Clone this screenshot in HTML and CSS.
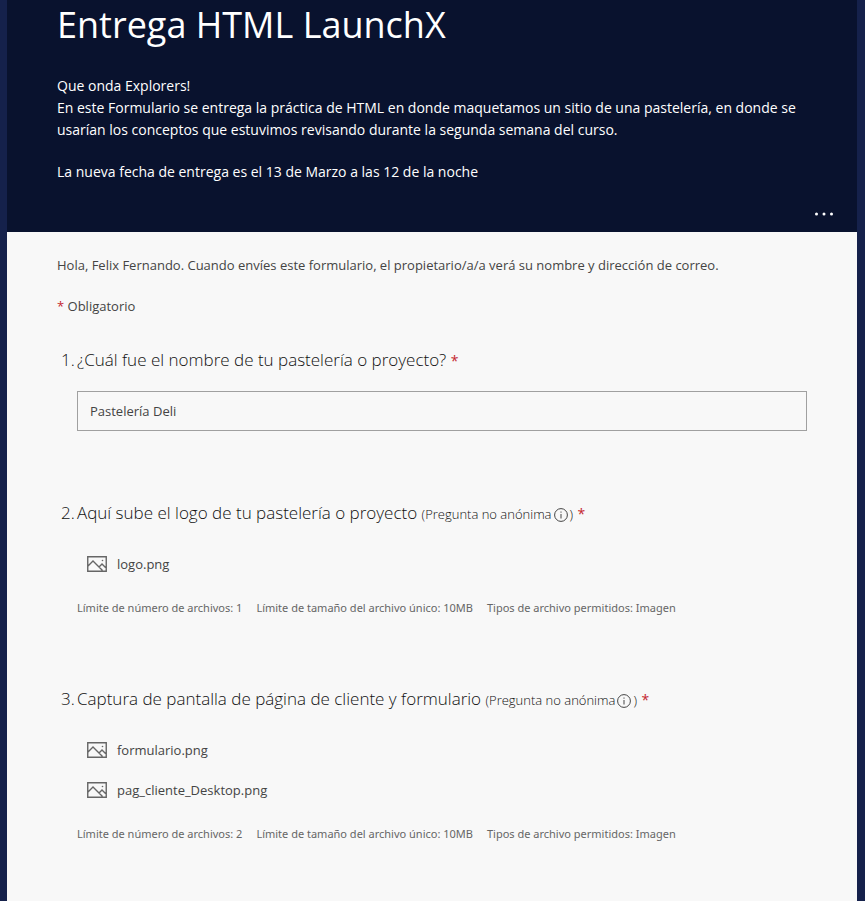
FILE: index.html
```html
<!DOCTYPE html>
<html lang="es">
<head>
<meta charset="utf-8">
<meta name="viewport" content="width=device-width, initial-scale=1">
<title>Entrega HTML LaunchX</title>
<link rel="stylesheet" href="styles.css">
</head>
<body>
<svg class="sprite" aria-hidden="true">
  <symbol id="picture" viewBox="0 0 20 16">
    <path d="M.75.75h18.5v14.5H.75zM1 10l5-5 9.500 9.500M12 11l3-3 4.500 4.500" fill="none" stroke="currentColor" stroke-width="1.400"/>
    <circle cx="15.500" cy="4.500" r=".8" fill="currentColor"/>
  </symbol>
  <symbol id="info" viewBox="0 0 14 14">
    <circle cx="7" cy="7" r="6.400" fill="none" stroke="currentColor"/>
    <path d="M7 6v4.500M7 3.500v1.200" stroke="currentColor"/>
  </symbol>
</svg>
<main class="form-page">
  <header class="banner">
    <h1 class="title">Entrega HTML LaunchX</h1>
    <div class="intro">
      <p>Que onda Explorers!</p>
      <p>En este Formulario se entrega la práctica de HTML en donde maquetamos un sitio de una pastelería, en donde se usarían los conceptos que estuvimos revisando durante la segunda semana del curso.</p>
      <p class="deadline">La nueva fecha de entrega es el 13 de Marzo a las 12 de la noche</p>
    </div>
    <button class="more" type="button" aria-label="Más opciones">
      <svg width="20" height="4" viewBox="0 0 20 4" fill="currentColor"><circle cx="2.500" cy="2" r="1.500"/><circle cx="10" cy="2" r="1.500"/><circle cx="17.500" cy="2" r="1.500"/></svg>
    </button>
  </header>
  <form class="content">
    <p class="notice">Hola, Felix Fernando. Cuando envíes este formulario, el propietario/a/a verá su nombre y dirección de correo.</p>
    <p class="required-note"><span class="star">*</span> Obligatorio</p>

    <section class="question">
      <h2 class="heading"><span class="number">1.</span><label for="project">¿Cuál fue el nombre de tu pastelería o proyecto? <span class="star">*</span></label></h2>
      <input class="answer" id="project" type="text" value="Pastelería Deli">
    </section>

    <section class="question">
      <h2 class="heading"><span class="number">2.</span><span>Aquí sube el logo de tu pastelería o proyecto <small class="hint">(Pregunta no anónima<svg class="info"><use href="#info"/></svg>)</small> <span class="star">*</span></span></h2>
      <ul class="files">
        <li class="file"><svg class="picture"><use href="#picture"/></svg>logo.png</li>
      </ul>
      <p class="limits"><span>Límite de número de archivos: 1</span><span>Límite de tamaño del archivo único: 10MB</span><span>Tipos de archivo permitidos: Imagen</span></p>
    </section>

    <section class="question">
      <h2 class="heading"><span class="number">3.</span><span>Captura de pantalla de página de cliente y formulario <small class="hint">(Pregunta no anónima<svg class="info"><use href="#info"/></svg>)</small> <span class="star">*</span></span></h2>
      <ul class="files">
        <li class="file"><svg class="picture"><use href="#picture"/></svg>formulario.png</li>
        <li class="file"><svg class="picture"><use href="#picture"/></svg>pag_cliente_Desktop.png</li>
      </ul>
      <p class="limits"><span>Límite de número de archivos: 2</span><span>Límite de tamaño del archivo único: 10MB</span><span>Tipos de archivo permitidos: Imagen</span></p>
    </section>
  </form>
</main>
</body>
</html>
```
FILE: styles.css
```css
* {
  box-sizing: border-box;
}

body,
h1,
h2,
p,
ul {
  margin: 0;
  padding: 0;
}

body {
  background: #15214b;
  color: #444;
  font-family: "Open Sans", "Noto Sans", sans-serif;
  font-size: 13px;
  line-height: 20px;
}

.sprite {
  display: none;
}

.form-page {
  display: flex;
  flex-direction: column;
  min-height: 100vh;
  margin: 0 8px 0 7px;
  background: #f8f8f8;
}

.banner {
  display: flex;
  flex-direction: column;
  padding: 0 20px 8px 50px;
  background: #09122e;
  color: #fff;
}

.title {
  font-size: 36px;
  font-weight: 400;
  line-height: 50px;
}

.intro {
  margin-top: 25px;
  padding-right: 20px;
  font-size: 14px;
  line-height: 22px;
}

.deadline {
  margin-top: 20px;
}

.more {
  display: flex;
  align-items: center;
  justify-content: center;
  align-self: flex-end;
  width: 26px;
  height: 20px;
  margin-top: 21px;
  padding: 0;
  border: 0;
  background: none;
  color: inherit;
}

.content {
  padding: 23px 50px 0;
}

.required-note {
  margin-top: 21px;
}

.star {
  color: #c4262e;
}

.question {
  padding: 31px 0 38px;
}

.heading {
  display: flex;
  color: #111;
  font-size: 17px;
  font-weight: 300;
  line-height: 26px;
}

.number {
  flex: none;
  width: 20px;
  padding-left: 4px;
}

.heading .star {
  font-size: 14px;
  font-weight: 400;
}

.hint {
  font-size: 13px;
  line-height: 1;
}

.info {
  width: 14px;
  height: 14px;
  margin: 0 2px;
  color: #444;
  vertical-align: -3px;
}

.answer {
  display: block;
  width: calc(100% - 20px);
  height: 40px;
  margin: 17px 0 0 20px;
  padding: 0 12px;
  border: 1px solid #a0a0a0;
  border-radius: 0;
  background: transparent;
  color: inherit;
  font: inherit;
}

.files {
  margin: 17px 0 0 20px;
  list-style: none;
}

.file {
  display: flex;
  align-items: center;
  gap: 10px;
  height: 40px;
  padding-left: 10px;
}

.picture {
  width: 20px;
  height: 16px;
  color: #666;
}

.limits {
  display: flex;
  flex-wrap: wrap;
  column-gap: 14px;
  margin: 15px 0 0 20px;
  color: #666;
  font-family: "Noto Sans", "Open Sans", sans-serif;
  font-size: 11px;
  line-height: 18px;
}
```
